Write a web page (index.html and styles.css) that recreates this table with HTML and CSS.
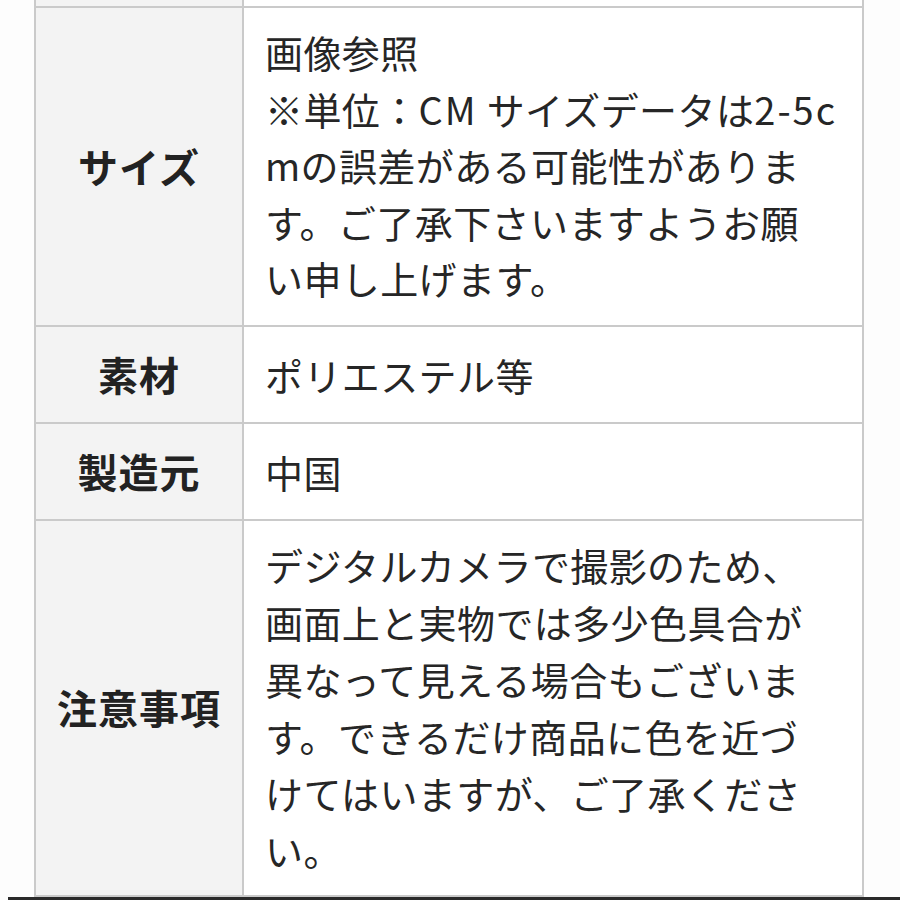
FILE: index.html
```html
<!DOCTYPE html>
<html lang="ja">
<head>
<meta charset="utf-8">
<title>商品詳細</title>
<link rel="stylesheet" href="styles.css">
</head>
<body>
<div class="page">
  <table class="spec">
    <tr class="cut">
      <th></th>
      <td></td>
    </tr>
    <tr class="size">
      <th>サイズ</th>
      <td>画像参照<br>※単位：<span class="latin">CM</span> サイズデータは<span class="latin">2-5c</span><br>mの誤差がある可能性がありま<br>す。ご了承下さいますようお願<br>い申し上げます。</td>
    </tr>
    <tr class="short">
      <th>素材</th>
      <td>ポリエステル等</td>
    </tr>
    <tr class="short">
      <th>製造元</th>
      <td>中国</td>
    </tr>
    <tr class="note">
      <th>注意事項</th>
      <td>デジタルカメラで撮影のため、<br>画面上と実物では多少色具合が<br>異なって見える場合もございま<br>す。できるだけ商品に色を近づ<br>けてはいますが、ご了承くださ<br>い。</td>
    </tr>
  </table>
</div>
<div class="bottom-bar"></div>
</body>
</html>
```
FILE: styles.css
```css
html, body {
  margin: 0;
  padding: 0;
  background: #fdfdfd;
  height: 900px;
  overflow: hidden;
}

body {
  font-family: "Noto Sans CJK JP", "Noto Sans", sans-serif;
  color: #262626;
}

.page {
  padding-left: 34px;
}

.spec {
  border-collapse: collapse;
  width: 830px;
  table-layout: fixed;
  background: #fff;
}

.spec th,
.spec td {
  border: 2px solid #cacaca;
  font-size: 38px;
  line-height: 55px;
  vertical-align: middle;
  padding: 0 21px;
}

.spec th {
  width: 206px;
  background: #f3f3f3;
  font-weight: 700;
  font-size: 40px;
  letter-spacing: 1px;
  text-align: center;
  padding: 0;
  color: #222;
}

.spec td {
  text-align: left;
  font-weight: 400;
  white-space: nowrap;
  letter-spacing: 0.4px;
}

.spec .latin {
  letter-spacing: 2px;
}

.spec .cut th,
.spec .cut td {
  height: 6px;
  line-height: 6px;
  border-top: 0;
}

.spec .size td {
  line-height: 56.5px;
  padding-top: 16px;
  padding-bottom: 18px;
}

.spec .short th,
.spec .short td {
  height: 95px;
  padding-top: 0;
  padding-bottom: 0;
}

.spec .note td {
  line-height: 57px;
  padding-top: 15px;
  padding-bottom: 17px;
}

.bottom-bar {
  position: fixed;
  left: 8px;
  right: 0;
  bottom: 0;
  height: 3px;
  background: #2a2a2a;
}
```
